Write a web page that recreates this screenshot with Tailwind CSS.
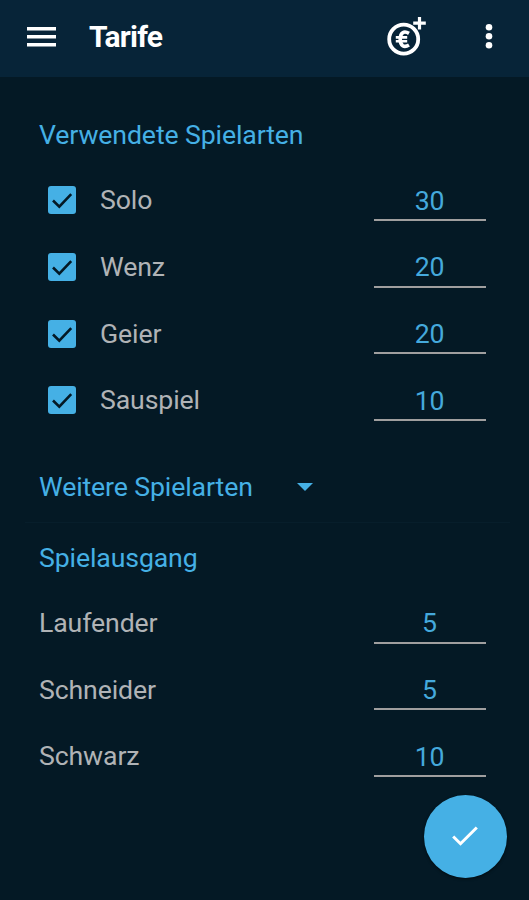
<!DOCTYPE html>
<html lang="de">
  <head>
    <meta charset="utf-8">
    <meta name="viewport" content="width=device-width, initial-scale=1">
    <title>Tarife</title>
    <script src="https://cdn.jsdelivr.net/npm/@tailwindcss/browser@4"></script>
  </head>

  <body class="relative h-[900px] overflow-hidden bg-[#041925] font-['Roboto',sans-serif] text-[26.67px] leading-8 tracking-[-0.12px] text-[#b0b3b6]">

    <!-- App bar -->
    <header class="flex h-[77px] items-center bg-[#072438] pb-1 text-white">
      <button class="ml-[27px]" aria-label="Menü">
        <svg class="block h-5 w-[29px]" viewBox="0 0 29 20" fill="currentColor">
          <path d="M0 0h29v3.600H0zM0 8h29v3.600H0zM0 16h29v3.600H0z"/>
        </svg>
      </button>
      <h1 class="ml-[33px] text-[30px] font-bold tracking-[-0.8px]">Tarife</h1>
      <div class="grow"></div>
      <button class="mr-[59px]" aria-label="Tarif hinzufügen">
        <svg class="block h-10 w-10" viewBox="0 0 40 40" fill="none" stroke="currentColor">
          <circle cx="17.700" cy="22.200" r="14.500" stroke-width="3.800"/>
          <path d="M33.500 -0.200v12.800M27.200 6.200h12.600" stroke-width="3.200"/>
          <path d="M23 16.400c-5-3-8.800-.8-8.800 5.800s3.800 8.800 8.800 5.800" stroke-width="3.600"/>
          <path d="M9.800 20.400h11.400M9.800 24.200h11.400" stroke-width="2.600"/>
        </svg>
      </button>
      <button class="mr-[36px]" aria-label="Mehr">
        <svg class="block h-[26px] w-2" viewBox="0 0 8 26" fill="currentColor">
          <circle cx="4" cy="3.300" r="3.300"/>
          <circle cx="4" cy="12.300" r="3.300"/>
          <circle cx="4" cy="21.300" r="3.300"/>
        </svg>
      </button>
    </header>

    <main>
      <section>
        <h2 class="flex h-[90px] items-center pt-[26px] pl-[39px] text-[#45b0e5]">Verwendete Spielarten</h2>

        <div class="flex h-[66.67px] items-center pr-[43.5px] pl-12">
          <svg class="h-7 w-7" viewBox="0 0 28 28"><rect width="28" height="28" rx="3" fill="#45b0e5"/><path d="M5 14.500l6.300 6.200L23.200 8.200" fill="none" stroke="#041925" stroke-width="2.600"/></svg>
          <span class="ml-6 grow">Solo</span>
          <span class="h-[41.5px] w-28 border-b-2 border-[#a09f9f] pt-[5px] text-center text-[#45a9dc]">30</span>
        </div>
        <div class="flex h-[66.67px] items-center pr-[43.5px] pl-12">
          <svg class="h-7 w-7" viewBox="0 0 28 28"><rect width="28" height="28" rx="3" fill="#45b0e5"/><path d="M5 14.500l6.300 6.200L23.200 8.200" fill="none" stroke="#041925" stroke-width="2.600"/></svg>
          <span class="ml-6 grow">Wenz</span>
          <span class="h-[41.5px] w-28 border-b-2 border-[#a09f9f] pt-[5px] text-center text-[#45a9dc]">20</span>
        </div>
        <div class="flex h-[66.67px] items-center pr-[43.5px] pl-12">
          <svg class="h-7 w-7" viewBox="0 0 28 28"><rect width="28" height="28" rx="3" fill="#45b0e5"/><path d="M5 14.500l6.300 6.200L23.200 8.200" fill="none" stroke="#041925" stroke-width="2.600"/></svg>
          <span class="ml-6 grow">Geier</span>
          <span class="h-[41.5px] w-28 border-b-2 border-[#a09f9f] pt-[5px] text-center text-[#45a9dc]">20</span>
        </div>
        <div class="flex h-[66.67px] items-center pr-[43.5px] pl-12">
          <svg class="h-7 w-7" viewBox="0 0 28 28"><rect width="28" height="28" rx="3" fill="#45b0e5"/><path d="M5 14.500l6.300 6.200L23.200 8.200" fill="none" stroke="#041925" stroke-width="2.600"/></svg>
          <span class="ml-6 grow">Sauspiel</span>
          <span class="h-[41.5px] w-28 border-b-2 border-[#a09f9f] pt-[5px] text-center text-[#45a9dc]">10</span>
        </div>
      </section>

      <!-- Collapsed section -->
      <div class="mr-[19px] ml-[25px] flex h-[89px] items-center border-b border-[#071e2b] pt-[18px] pl-[14px] text-[#45b0e5]">
        <h2 class="w-[258px]">Weitere Spielarten</h2>
        <svg class="h-2 w-4" viewBox="0 0 16 8" fill="currentColor"><path d="M0 0h16l-8 8z"/></svg>
      </div>

      <section>
        <h2 class="flex h-[67px] items-center pt-1 pl-[39px] text-[#45b0e5]">Spielausgang</h2>

        <div class="flex h-[66.67px] items-center pr-[43.5px] pl-[39px]">
          <span class="grow">Laufender</span>
          <span class="h-[41.5px] w-28 border-b-2 border-[#a09f9f] pt-[5px] text-center text-[#45a9dc]">5</span>
        </div>
        <div class="flex h-[66.67px] items-center pr-[43.5px] pl-[39px]">
          <span class="grow">Schneider</span>
          <span class="h-[41.5px] w-28 border-b-2 border-[#a09f9f] pt-[5px] text-center text-[#45a9dc]">5</span>
        </div>
        <div class="flex h-[66.67px] items-center pr-[43.5px] pl-[39px]">
          <span class="grow">Schwarz</span>
          <span class="h-[41.5px] w-28 border-b-2 border-[#a09f9f] pt-[5px] text-center text-[#45a9dc]">10</span>
        </div>
      </section>
    </main>

    <!-- Save button floats over the list -->
    <button class="absolute right-[22.5px] bottom-[22.5px] flex size-[83px] items-center justify-center rounded-full bg-[#45b0e5] text-white shadow-[0_1px_3px_rgba(0,0,0,0.6)]" aria-label="Speichern">
      <svg class="h-5 w-[26px]" viewBox="0 0 26 20" fill="none" stroke="currentColor" stroke-width="3"><path d="M1.200 10.500l7.300 7.200L24.800 1.500"/></svg>
    </button>
  </body>
</html>
